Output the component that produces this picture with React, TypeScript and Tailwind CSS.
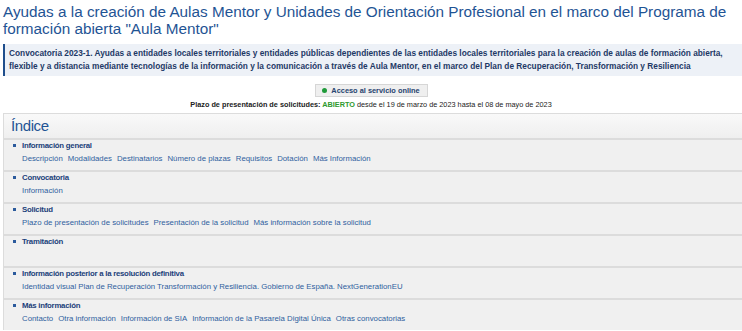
import React from 'react';

const sections = [
  {
    title: 'Información general',
    links: ['Descripción', 'Modalidades', 'Destinatarios', 'Número de plazas', 'Requisitos', 'Dotación', 'Más Información'],
  },
  { title: 'Convocatoria', links: ['Información'] },
  {
    title: 'Solicitud',
    links: ['Plazo de presentación de solicitudes', 'Presentación de la solicitud', 'Más información sobre la solicitud'],
  },
  { title: 'Tramitación', links: [] },
  {
    title: 'Información posterior a la resolución definitiva',
    links: ['Identidad visual Plan de Recuperación Transformación y Resiliencia. Gobierno de España. NextGenerationEU'],
  },
  {
    title: 'Más información',
    links: ['Contacto', 'Otra información', 'Información de SIA', 'Información de la Pasarela Digital Única', 'Otras convocatorias'],
  },
];

export default function App() {
  return (
    <div className="w-[742px] h-[331px] overflow-hidden bg-white font-['Liberation_Sans',Arial,sans-serif]">
      {/* Title */}
      <h1 className="px-[3px] pt-[3px] text-[15.3px] leading-[17px] text-[#1f5494]">
        Ayudas a la creación de Aulas Mentor y Unidades de Orientación Profesional en el marco del Programa de formación abierta "Aula Mentor"
      </h1>

      {/* Intro */}
      <div className="ml-[3px] mt-[7px] border-l-2 border-[#1f4e8c] bg-[#edf1f7] px-[4px] py-[3px] text-[8.3px] font-bold leading-[13px] text-[#1e3966]">
        Convocatoria 2023-1. Ayudas a entidades locales territoriales y entidades públicas dependientes de las entidades locales territoriales para la creación de aulas de formación abierta, flexible y a distancia mediante tecnologías de la información y la comunicación a través de Aula Mentor, en el marco del Plan de Recuperación, Transformación y Resiliencia
      </div>

      {/* Access button */}
      <div className="mt-[8px] flex justify-center">
        <div className="flex h-[13px] w-[113px] items-center justify-center gap-[4px] border border-[#d6d6d6] bg-[#efefef] text-[7.4px] font-bold text-[#26436e]">
          <span className="h-[5px] w-[5px] rounded-full bg-[#1f9a3a]" />
          Acceso al servicio online
        </div>
      </div>

      {/* Plazo */}
      <p className="mt-[2px] text-center text-[7.3px] leading-[11px] text-[#222]">
        <span className="font-bold">Plazo de presentación de solicitudes: </span>
        <span className="font-bold text-[#2e9a2e]">ABIERTO</span> desde el 19 de marzo de 2023 hasta el 08 de mayo de 2023
      </p>

      {/* Index */}
      <div className="ml-[3px] mt-[3px] border-l border-t border-[#dcdcdc] bg-[#f0f0f0]">
        <div className="h-[24px] bg-gradient-to-b from-[#f9f9f9] to-[#efefef] pl-[7px] text-[15px] leading-[24px] tracking-[-0.4px] text-[#1f5494]">
          Índice
        </div>
        {sections.map((s) => (
          <div key={s.title} className="h-[32px] border-t-2 border-[#dcdcdc]">
            <div className="flex items-center text-[7.8px] font-bold leading-[11px] tracking-[-0.25px] text-[#1b3f7a]">
              <span className="ml-[9px] mr-[6px] h-[3px] w-[3px] bg-[#2b5a9c]" />
              {s.title}
            </div>
            <div className="mt-[2px] flex gap-[5px] pl-[18px] text-[7.8px] leading-[11px] text-[#2f5f9e]">
              {s.links.map((l) => (
                <span key={l}>{l}</span>
              ))}
            </div>
          </div>
        ))}
      </div>
    </div>
  );
}
